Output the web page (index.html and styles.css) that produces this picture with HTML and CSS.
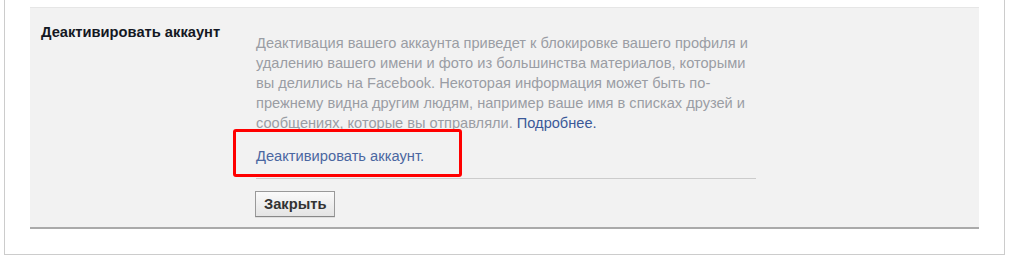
FILE: index.html
```html
<!DOCTYPE html>
<html lang="ru">
<head>
<meta charset="utf-8">
<link rel="stylesheet" href="styles.css">
</head>
<body>
<div class="outer">
  <div class="panel">
    <div class="label">Деактивировать аккаунт</div>
    <div class="content">
      <p class="desc">Деактивация вашего аккаунта приведет к блокировке вашего профиля и<br>удалению вашего имени и фото из большинства материалов, которыми<br>вы делились на Facebook. Некоторая информация может быть по-<br>прежнему видна другим людям, например ваше имя в списках друзей и<br>сообщениях, которые вы отправляли. <a class="link" href="#">Подробнее.</a></p>
      <div class="action">
        <a class="link deact" href="#">Деактивировать аккаунт.</a>
        <span class="highlight"></span>
      </div>
      <div class="buttons">
        <button class="btn" type="button">Закрыть</button>
      </div>
    </div>
  </div>
</div>
</body>
</html>
```

FILE: styles.css
```css
html, body {
  margin: 0;
  padding: 0;
  background: #fff;
}
body {
  font-family: "Liberation Sans", Arial, sans-serif;
  width: 1011px;
  height: 269px;
  overflow: hidden;
}
.outer {
  margin: 0 6px 0 4px;
  border: 1px solid #cccccc;
  border-top: none;
  padding: 7px 25px 25px 25px;
}
.panel {
  background: #f2f2f2;
  border-top: 1px solid #e6e6e6;
  border-bottom: 2px solid #aaaaaa;
  display: grid;
  grid-template-columns: 215px 500px;
  padding: 15px 0 10px 11px;
}
.label {
  font-weight: bold;
  font-size: 14.7px;
  line-height: 18px;
  color: #141823;
}
.content {
  padding-top: 10px;
}
.desc {
  margin: 0;
  width: 540px;
  font-size: 14.6px;
  line-height: 20px;
  color: #9a9da4;
  white-space: nowrap;
}
.link {
  color: #3b5998;
  text-decoration: none;
}
.action {
  position: relative;
  padding: 13px 0 12px;
  border-bottom: 1px solid #cccccc;
  font-size: 14.7px;
  line-height: 20px;
}
.deact {
  color: #4b67a1;
}
.highlight {
  position: absolute;
  left: -23px;
  top: -4px;
  width: 223px;
  height: 42px;
  border: 3px solid #ff0000;
  border-radius: 3px;
}
.buttons {
  padding-top: 12px;
}
.btn {
  font-family: "Liberation Sans", Arial, sans-serif;
  font-weight: bold;
  font-size: 14.7px;
  color: #333;
  height: 26px;
  padding: 0 8px;
  margin: 0 0 0 -1px;
  border: 1px solid #999;
  border-bottom-color: #888;
  background: linear-gradient(#fafafa, #e4e4e4);
  box-shadow: 0 1px 0 rgba(0,0,0,0.08);
}
```
